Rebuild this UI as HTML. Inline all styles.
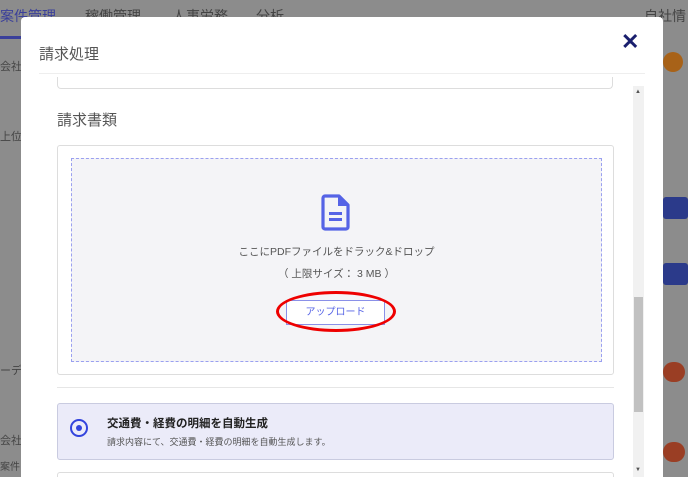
<!DOCTYPE html>
<html><head><meta charset="utf-8"><style>
*{margin:0;padding:0;box-sizing:border-box}
html,body{width:688px;height:477px;overflow:hidden}
body{background:#8c8c8c;font-family:"Liberation Sans","Noto Sans CJK JP",sans-serif;position:relative}
.bg{position:absolute;font-size:13px;color:#444}
.modal{position:absolute;left:21px;top:17px;width:642px;height:460px;background:#fff;border-radius:4px 4px 0 0;overflow:hidden}
.t{position:absolute;font-size:14px;color:#555}
</style></head><body>
<div class="bg" style="left:0;top:6px;color:#3a3f9a;font-size:14px">案件管理</div>
<div class="bg" style="left:85px;top:6px;font-size:14px">稼働管理</div>
<div class="bg" style="left:172px;top:6px;font-size:14px">人事労務</div>
<div class="bg" style="left:256px;top:6px;font-size:14px">分析</div>
<div class="bg" style="left:644px;top:6px;font-size:14px">自社情報</div>
<div style="position:absolute;left:0;top:36px;width:21px;height:3px;background:#3a3f9a"></div>
<div class="bg" style="left:0;top:58px;font-size:11px">会社エ</div>
<div class="bg" style="left:0;top:128px;font-size:11px">上位会</div>
<div class="bg" style="left:0;top:362px;font-size:11px">ーディ</div>
<div class="bg" style="left:0;top:432px;font-size:11px">会社ス</div>
<div class="bg" style="left:0;top:458px;font-size:10px">案件</div>
<div style="position:absolute;left:663px;top:52px;width:20px;height:20px;border-radius:10px;background:#a86218"></div>
<div style="position:absolute;left:663px;top:197px;width:25px;height:22px;background:#2b3a8a;border-radius:3px"></div>
<div style="position:absolute;left:663px;top:263px;width:25px;height:22px;background:#2b3a8a;border-radius:3px"></div>
<div style="position:absolute;left:663px;top:362px;width:22px;height:20px;border-radius:10px;background:#9a3e24"></div>
<div style="position:absolute;left:663px;top:442px;width:22px;height:20px;border-radius:10px;background:#9a3e24"></div>
<div class="modal">
  <div class="t" style="left:18px;top:26px;font-size:15px">請求処理</div>
  <div style="position:absolute;left:600px;top:12px;font-size:22px;font-weight:bold;color:#1a1f6e">✕</div>
  <div style="position:absolute;left:18px;top:56px;width:606px;height:1px;background:#eee"></div>
  <div style="position:absolute;left:36px;top:60px;width:556px;height:12px;border:1px solid #ddd;border-top:none;border-radius:0 0 4px 4px"></div>
  <div class="t" style="left:36px;top:92px;font-size:15px">請求書類</div>
  <div style="position:absolute;left:36px;top:128px;width:557px;height:230px;border:1px solid #ddd;border-radius:3px">
    <div style="position:absolute;left:13px;top:12px;width:531px;height:204px;border:1px dashed #9aa0f0;background:#f4f4f7"></div>
    <svg style="position:absolute;left:263px;top:48px" width="30" height="37" viewBox="0 0 30 37"><path d="M4 2h14l9 9v22a2 2 0 0 1-2 2H4a2 2 0 0 1-2-2V4a2 2 0 0 1 2-2z" fill="none" stroke="#5563e6" stroke-width="3.2" stroke-linejoin="round"/><path d="M17 2v10h10" fill="#5563e6"/><rect x="8" y="18" width="13" height="3" fill="#5563e6"/><rect x="8" y="24" width="13" height="3" fill="#5563e6"/></svg>
    <div style="position:absolute;left:0;width:557px;top:98px;text-align:center;font-size:10.5px;color:#555">ここにPDFファイルをドラック&amp;ドロップ</div>
    <div style="position:absolute;left:0;width:557px;top:120px;text-align:center;font-size:10.5px;color:#555">（ 上限サイズ： 3 MB ）</div>
    <div style="position:absolute;left:228px;top:154px;width:99px;height:25px;border:1px solid #8a90e8;background:#fff;text-align:center;line-height:23px;font-size:10px;color:#5563e6">アップロード</div>
    <div style="position:absolute;left:218px;top:145px;width:120px;height:41px;border:3px solid #e00;border-radius:50%"></div>
  </div>
  <div style="position:absolute;left:36px;top:370px;width:557px;height:1px;background:#e6e6e6"></div>
  <div style="position:absolute;left:36px;top:386px;width:557px;height:57px;border:1px solid #c9cbe0;background:#ebebf9;border-radius:3px">
    <div style="position:absolute;left:12px;top:15px;width:18px;height:18px;border:2px solid #3344dd;border-radius:50%"></div>
    <div style="position:absolute;left:18px;top:21px;width:6px;height:6px;background:#3344dd;border-radius:50%"></div>
    <div style="position:absolute;left:49px;top:11px;font-size:11.5px;font-weight:bold;color:#222">交通費・経費の明細を自動生成</div>
    <div style="position:absolute;left:49px;top:31px;font-size:9px;color:#555">請求内容にて、交通費・経費の明細を自動生成します。</div>
  </div>
  <div style="position:absolute;left:36px;top:455px;width:557px;height:20px;border:1px solid #ddd;border-radius:3px"></div>
  <div style="position:absolute;left:612px;top:69px;width:11px;height:401px;background:#f1f1f1"></div>
  <div style="position:absolute;left:613px;top:280px;width:9px;height:115px;background:#c1c1c1"></div>
  <div style="position:absolute;left:614px;top:72px;font-size:6px;color:#555">▲</div>
  <div style="position:absolute;left:614px;top:450px;font-size:6px;color:#555">▼</div>
</div>
</body></html>
